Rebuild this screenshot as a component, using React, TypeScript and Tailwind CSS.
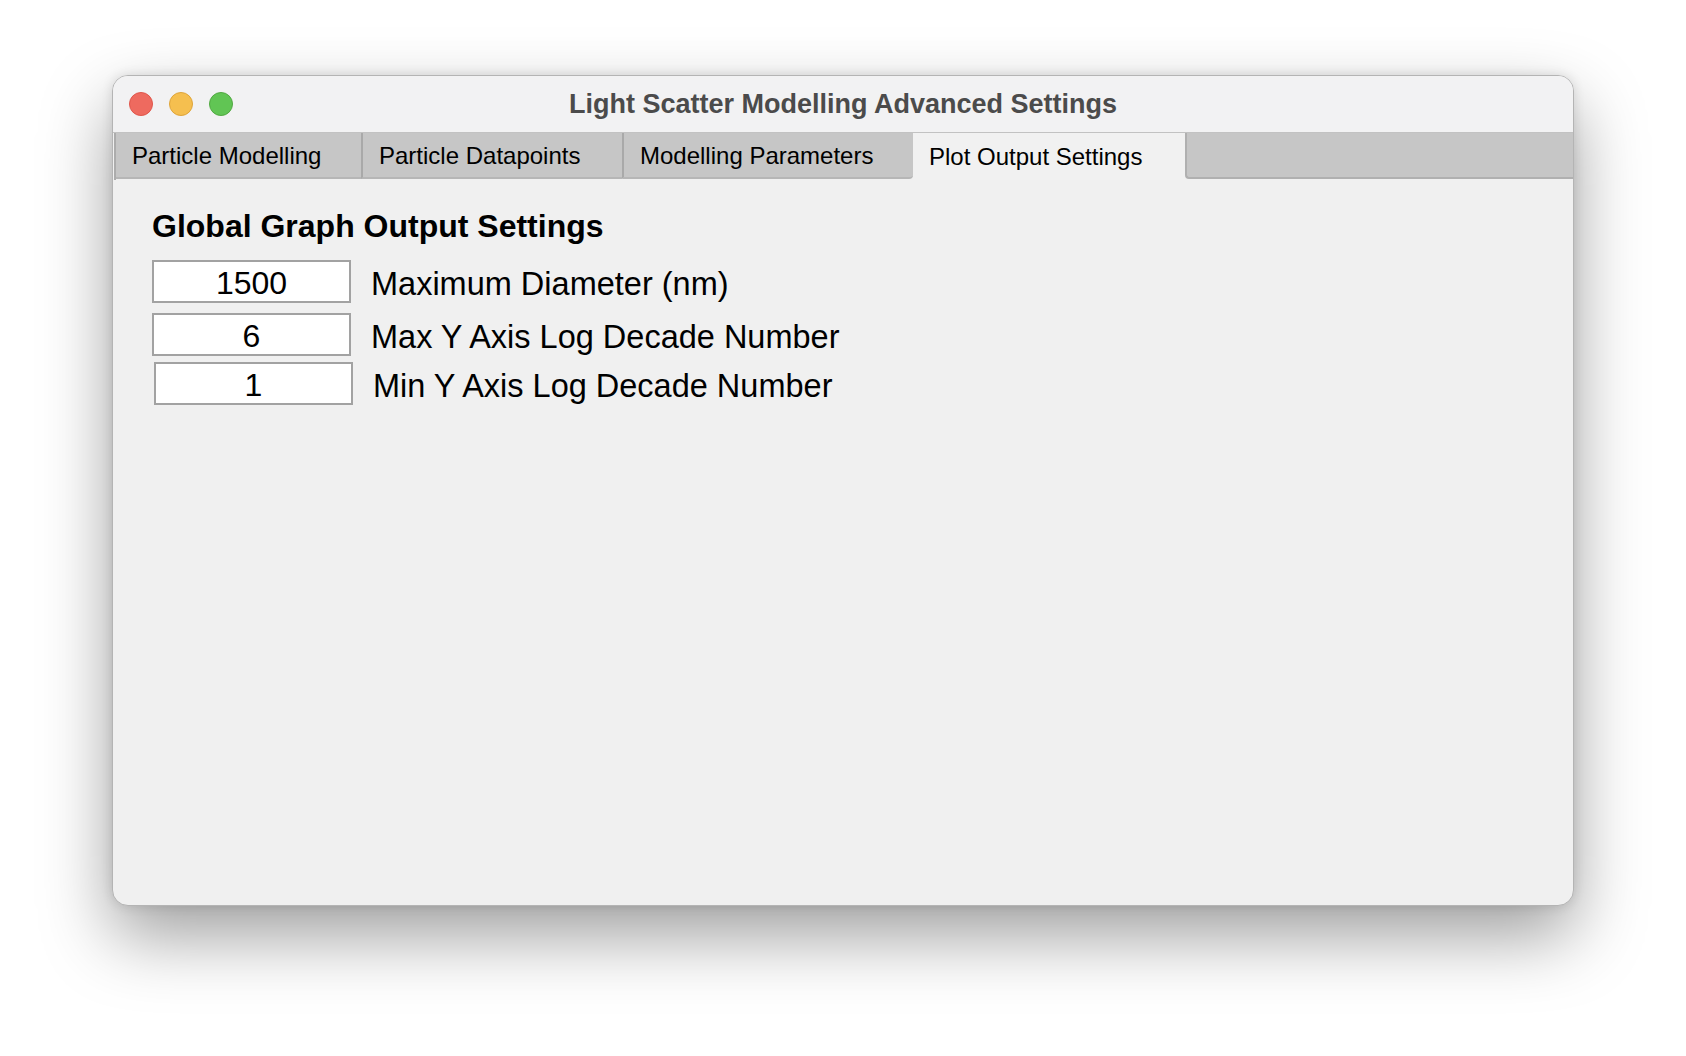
import React from "react";

const tabs = [
  { label: "Particle Modelling", w: "w-[245px]" },
  { label: "Particle Datapoints", w: "w-[261px]" },
  { label: "Modelling Parameters", w: "w-[291px]" },
];

const fields = [
  { value: "1500", label: "Maximum Diameter (nm)", row: "mt-[16px]" },
  { value: "6", label: "Max Y Axis Log Decade Number", row: "mt-[10px]" },
  { value: "1", label: "Min Y Axis Log Decade Number", row: "mt-[6px] ml-[2px]" },
];

export default function App() {
  return (
    <div
      className="h-[1056px] w-[1686px] overflow-hidden bg-white pl-[112px] pt-[75px]"
      style={{ fontFamily: '"Liberation Sans", Arial, sans-serif' }}
    >
      <div className="flex h-[831px] w-[1462px] flex-col overflow-hidden rounded-[16px] border border-[#b4b4b4] bg-[#f0f0f0] shadow-[0_30px_70px_rgba(0,0,0,0.38),0_0_12px_rgba(0,0,0,0.12)]">
        {/* title bar */}
        <div className="relative flex h-[57px] shrink-0 items-center border-b border-[#c2c2c2] bg-[#f2f2f3]">
          <div className="flex items-center gap-[16px] pl-[16px]">
            <span className="h-[24px] w-[24px] rounded-full border border-[#e0564b] bg-[#ee6a5f]" />
            <span className="h-[24px] w-[24px] rounded-full border border-[#dfa53a] bg-[#f5bf4f]" />
            <span className="h-[24px] w-[24px] rounded-full border border-[#52a942] bg-[#61c554]" />
          </div>
          <div className="absolute inset-0 flex items-center justify-center pointer-events-none">
            <span className="text-[27px] font-bold text-[#4b4b4b]">
              Light Scatter Modelling Advanced Settings
            </span>
          </div>
        </div>

        {/* tab bar */}
        <div className="flex h-[47px] shrink-0 bg-[#f0f0f0] pl-px">
          <div className="flex border-l-2 border-[#acacac]">
            {tabs.map((t, i) => (
              <div
                key={t.label}
                className={`flex h-[46px] items-center border-b-2 border-[#b6b6b6] bg-[#c6c6c6] pl-[16px] pt-[2px] text-[24px] text-black ${t.w} ${
                  i > 0 ? "border-l-2 border-l-[#a9a9a9]" : ""
                } ${i === tabs.length - 1 ? "rounded-br-[4px]" : ""}`}
              >
                {t.label}
              </div>
            ))}
          </div>
          <div className="flex h-[47px] w-[272px] items-center bg-[#f1f1f1] pl-[16px] text-[24px] text-black">
            Plot Output Settings
          </div>
          <div className="h-[46px] flex-1 rounded-bl-[4px] border-b-2 border-l-2 border-[#b0b0b0] bg-[#c6c6c6]" />
        </div>

        {/* content */}
        <div className="flex flex-1 flex-col pl-[39px] pt-[28px] text-black">
          <h2 className="text-[32px] font-bold leading-[36px]">Global Graph Output Settings</h2>
          {fields.map((f) => (
            <div key={f.label} className={`flex h-[43px] items-center ${f.row}`}>
              <div className="flex h-[43px] w-[199px] items-center justify-center border-2 border-[#a2a2a2] bg-white pt-[2px] text-[32px] leading-[36px]">
                {f.value}
              </div>
              <span className="ml-[20px] pt-[5px] text-[32.5px] leading-[38px]">{f.label}</span>
            </div>
          ))}
        </div>
      </div>
    </div>
  );
}
